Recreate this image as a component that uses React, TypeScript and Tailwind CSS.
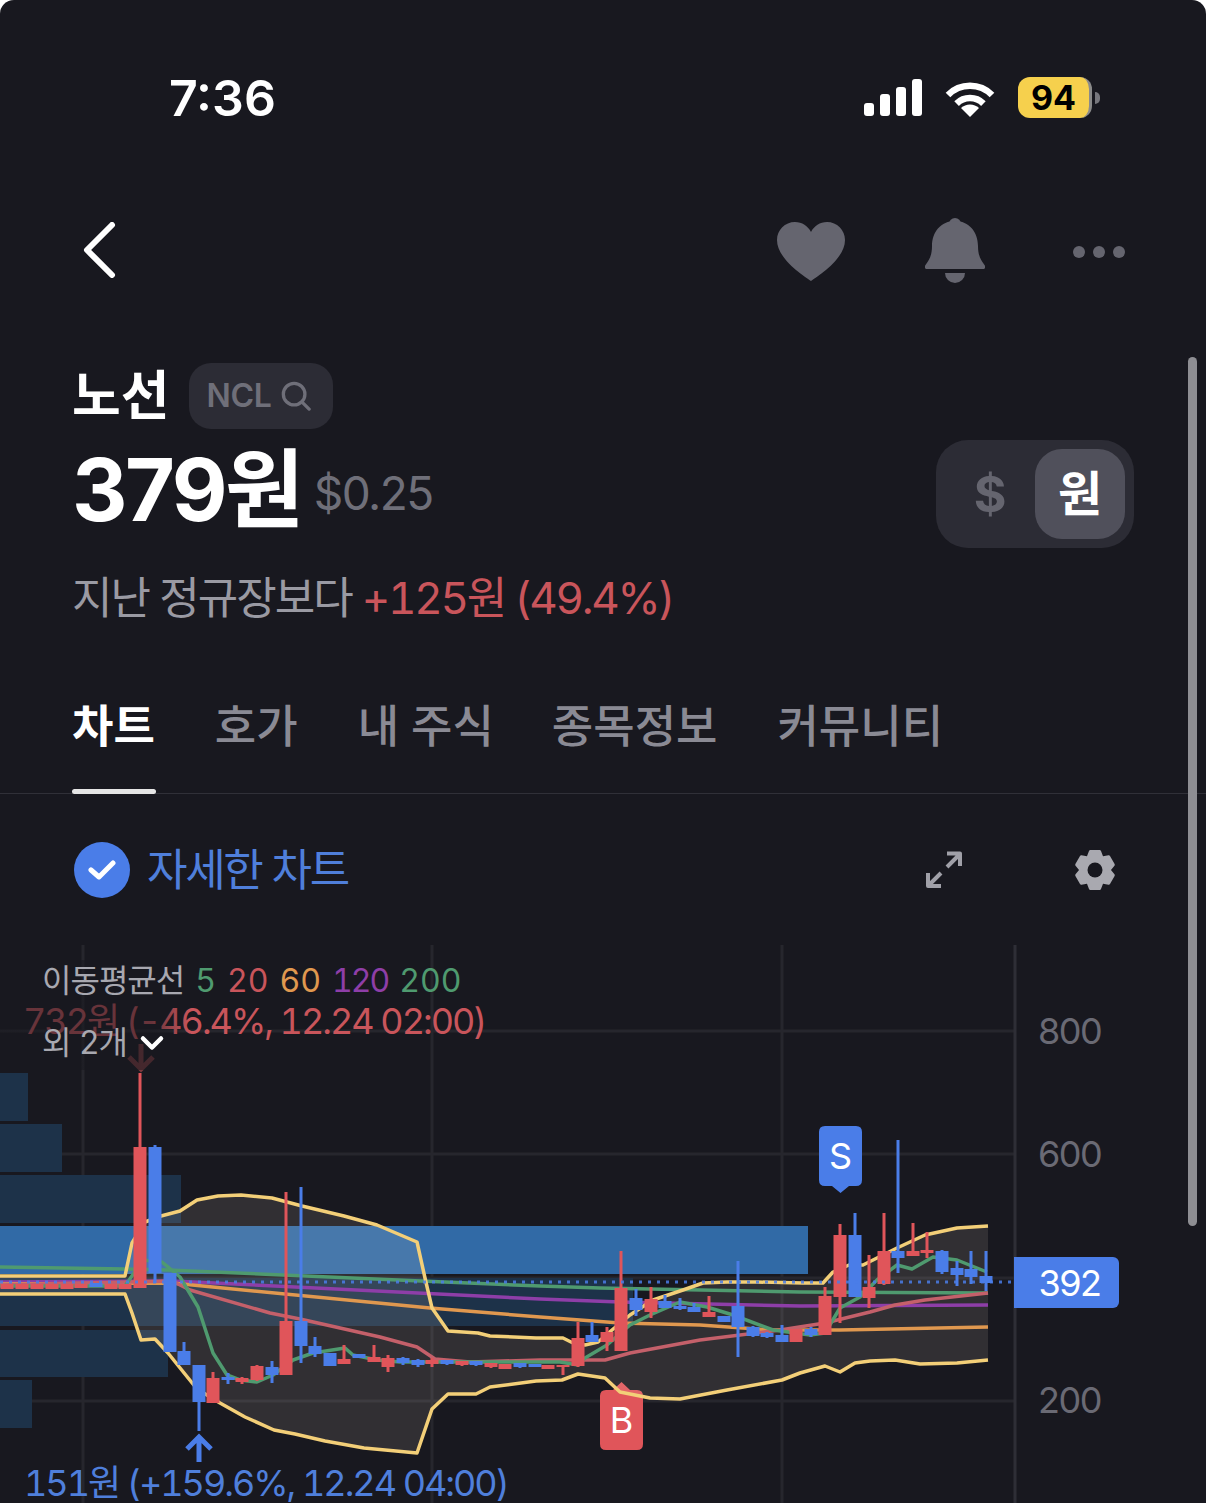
import React from "react";
import { ChevronDown } from "lucide-react";

const RED = "#e0555a";
const BLUE = "#4a7de8";

// x, wick top, wick bottom, body top, body bottom, red?
type Candle = [number, number, number, number, number, boolean];

const candles: Candle[] = [
  [7, 1284, 1289, 1284, 1289, true], [22, 1284, 1289, 1284, 1289, true], [37, 1284, 1289, 1284, 1289, true],
  [52, 1284, 1289, 1284, 1289, true], [67, 1284, 1289, 1284, 1289, true], [81, 1284, 1288, 1284, 1288, true],
  [96, 1283, 1287, 1283, 1287, false], [111, 1284, 1289, 1284, 1289, true], [125, 1284, 1289, 1284, 1289, true],
  [140, 1073, 1288, 1147, 1288, true],
  [155, 1145, 1283, 1147, 1273, false],
  [170, 1273, 1352, 1273, 1352, false],
  [184, 1342, 1365, 1351, 1365, false],
  [199, 1365, 1431, 1365, 1402, false],
  [213, 1372, 1403, 1378, 1403, true],
  [228, 1373, 1384, 1377, 1380, false],
  [242, 1377, 1384, 1378, 1382, true],
  [257, 1365, 1381, 1366, 1380, true],
  [272, 1361, 1383, 1367, 1375, false],
  [286, 1192, 1375, 1321, 1375, true],
  [301, 1187, 1363, 1321, 1346, false],
  [315, 1337, 1357, 1346, 1354, false],
  [330, 1353, 1366, 1353, 1366, false],
  [344, 1345, 1364, 1359, 1364, true],
  [359, 1354, 1358, 1354, 1358, false],
  [374, 1345, 1362, 1357, 1362, true],
  [388, 1355, 1372, 1358, 1367, true],
  [403, 1357, 1365, 1358, 1363, false],
  [418, 1359, 1367, 1360, 1365, false],
  [432, 1358, 1367, 1360, 1364, true],
  [447, 1360, 1365, 1360, 1364, false],
  [462, 1361, 1366, 1361, 1365, true],
  [476, 1361, 1366, 1361, 1365, false],
  [491, 1363, 1368, 1363, 1367, true],
  [505, 1364, 1369, 1364, 1369, true],
  [520, 1363, 1368, 1363, 1367, false],
  [535, 1364, 1367, 1364, 1367, false],
  [548, 1365, 1369, 1365, 1369, true],
  [563, 1365, 1375, 1365, 1367, true],
  [578, 1322, 1367, 1338, 1366, true],
  [592, 1322, 1342, 1335, 1342, false],
  [607, 1327, 1351, 1332, 1342, true],
  [621, 1251, 1351, 1288, 1351, true],
  [636, 1289, 1316, 1298, 1310, false],
  [651, 1287, 1318, 1299, 1312, true],
  [665, 1295, 1308, 1301, 1308, false],
  [680, 1298, 1310, 1306, 1309, false],
  [694, 1303, 1312, 1307, 1312, false],
  [709, 1296, 1317, 1312, 1317, true],
  [724, 1316, 1322, 1316, 1322, false],
  [738, 1261, 1357, 1306, 1327, false],
  [753, 1326, 1337, 1327, 1336, false],
  [767, 1332, 1338, 1333, 1337, false],
  [782, 1325, 1342, 1335, 1342, false],
  [796, 1329, 1342, 1329, 1342, true],
  [811, 1327, 1337, 1329, 1335, false],
  [825, 1287, 1335, 1296, 1335, true],
  [840, 1224, 1323, 1235, 1297, true],
  [855, 1213, 1297, 1235, 1297, false],
  [869, 1255, 1308, 1287, 1298, true],
  [884, 1213, 1285, 1251, 1284, true],
  [898, 1140, 1273, 1251, 1258, false],
  [913, 1223, 1256, 1251, 1256, true],
  [927, 1232, 1258, 1250, 1253, true],
  [942, 1250, 1274, 1251, 1272, false],
  [957, 1261, 1286, 1268, 1275, false],
  [971, 1251, 1284, 1269, 1277, false],
  [986, 1251, 1291, 1276, 1283, false],
];

const upperBand =
  "0,1276 125,1276 132,1243 145,1222 161,1216 180,1211 197,1200 218,1196 241,1195 272,1198 302,1206 344,1216 377,1225 417,1242 425,1278 432,1308 448,1331 478,1333 490,1336 536,1338 563,1338 573,1343 585,1345 598,1342 612,1330 630,1315 653,1300 683,1290 703,1283 727,1282 757,1282 803,1283 823,1283 833,1272 849,1265 863,1265 877,1258 897,1248 925,1235 957,1228 988,1226";
const lowerBand =
  "988,1360 957,1363 920,1364 895,1360 870,1361 855,1363 840,1372 825,1366 800,1373 782,1380 727,1390 680,1399 650,1398 620,1392 605,1378 578,1374 562,1380 536,1381 490,1387 476,1394 448,1394 432,1409 417,1453 364,1448 325,1441 295,1434 274,1430 245,1417 220,1403 197,1389 168,1353 155,1339 141,1340 132,1313 125,1294 0,1294";

const ma200 = "0,1267 125,1269 168,1270 421,1281 540,1286 600,1288 800,1292 988,1293";
const ma120 = "0,1282 172,1281 540,1299 620,1302 800,1306 988,1305";
const ma60 = "0,1284 172,1283 430,1308 540,1317 620,1323 700,1325 770,1330 840,1330 988,1327";
const ma20 =
  "0,1285 172,1281 190,1290 270,1313 300,1319 380,1337 417,1347 435,1359 470,1362 540,1360 605,1360 630,1353 700,1340 780,1330 825,1323 870,1312 895,1305 925,1300 988,1293";
const ma5 =
  "0,1286 125,1286 143,1260 162,1262 180,1277 198,1307 213,1353 227,1375 240,1380 257,1382 273,1375 293,1360 313,1353 345,1348 353,1355 377,1360 400,1362 560,1362 578,1365 585,1358 607,1345 630,1325 650,1315 680,1302 707,1307 733,1315 773,1330 810,1335 825,1333 840,1308 860,1297 877,1280 897,1265 912,1269 933,1257 957,1260 987,1272";

// six teeth, rounded off with a round stroke
const gearPoints = Array.from({ length: 6 }, (_, k) => {
  const c = k * 60 - 90;
  return [
    [c - 14, 19],
    [c + 14, 19],
    [c + 30, 14],
  ]
    .map(([deg, r]) => {
      const a = (deg * Math.PI) / 180;
      return `${(22 + r * Math.cos(a)).toFixed(1)},${(22 + r * Math.sin(a)).toFixed(1)}`;
    })
    .join(" ");
}).join(" ");

function Chart() {
  return (
    <svg viewBox="0 930 1206 573" className="absolute inset-0 w-[1206px] h-[573px]">
      {/* grid */}
      <g stroke="#26262d" strokeWidth="3">
        <line x1="83" y1="945" x2="83" y2="1503" />
        <line x1="432" y1="945" x2="432" y2="1503" />
        <line x1="782" y1="945" x2="782" y2="1503" />
        <line x1="0" y1="1031" x2="1015" y2="1031" />
        <line x1="0" y1="1154" x2="1015" y2="1154" />
        <line x1="0" y1="1278" x2="1015" y2="1278" />
        <line x1="0" y1="1401" x2="1015" y2="1401" />
      </g>
      <line x1="1015" y1="945" x2="1015" y2="1503" stroke="#2e2e36" strokeWidth="3" />

      {/* volume profile */}
      <g fill="#1d3249">
        <rect x="0" y="1073" width="28" height="48" />
        <rect x="0" y="1124" width="62" height="48" />
        <rect x="0" y="1175" width="181" height="48" />
        <rect x="0" y="1278" width="633" height="48" />
        <rect x="0" y="1330" width="168" height="47" />
        <rect x="0" y="1380" width="32" height="48" />
      </g>
      <rect x="0" y="1226" width="808" height="48" fill="#316aa6" />

      {/* B badge goes under the band line */}
      <path
        d="M606 1390 H613 L621.5 1382 L630 1390 H637 Q643 1390 643 1396 V1444 Q643 1450 637 1450 H606 Q600 1450 600 1444 V1396 Q600 1390 606 1390Z"
        fill={RED}
      />

      <polygon points={`${upperBand} ${lowerBand}`} fill="#fff0dc" fillOpacity="0.11" />

      <g fill="none" strokeWidth="3.5" strokeLinejoin="round">
        <polyline points={ma200} stroke="#4f9a6f" />
        <polyline points={ma120} stroke="#8e3ea8" />
        <polyline points={ma60} stroke="#e0984f" />
        <polyline points={ma20} stroke="#c4606a" />
        <polyline points={ma5} stroke="#4f9a6f" />
        <polyline points={upperBand} stroke="#f3cf78" />
        <polyline points={lowerBand} stroke="#f3cf78" />
      </g>

      {candles.map(([x, wt, wb, bt, bb, up]) => (
        <g key={x} fill={up ? RED : BLUE}>
          <rect x={x - 1.5} y={wt} width="3" height={wb - wt} />
          <rect x={x - 6.5} y={bt} width="13" height={bb - bt} />
        </g>
      ))}

      <line x1="0" y1="1282" x2="1014" y2="1282" stroke={BLUE} strokeWidth="3" strokeDasharray="3 6" strokeOpacity="0.85" />

      {/* S badge */}
      <path
        d="M825 1126 H856 Q862 1126 862 1132 V1180 Q862 1186 856 1186 H849 L840.5 1193 L832 1186 H825 Q819 1186 819 1180 V1132 Q819 1126 825 1126Z"
        fill={BLUE}
      />

      {/* high and low arrows */}
      <path d="M141 1044 V1068 M129 1057 L141 1069 L153 1057" fill="none" stroke="#7a3a3e" strokeWidth="5" />
      <path d="M199 1462 V1438 M187 1449 L199 1437 L211 1449" fill="none" stroke={BLUE} strokeWidth="5" />
    </svg>
  );
}

export default function App() {
  return (
    <div className="relative w-[1206px] h-[1503px] overflow-hidden bg-white [font-family:Inter,'Noto_Sans_CJK_KR',sans-serif]">
      <div className="w-full h-full rounded-t-[14px] bg-[#18181f] flex flex-col">
        {/* status bar */}
        <div className="h-[196px] pl-[169px] pr-[106px] pb-[1px] flex items-center justify-between">
          <span className="text-[50px] leading-none font-semibold text-white">7:36</span>
          <div className="flex items-center">
            <svg width="58" height="38" viewBox="0 0 58 38" className="fill-white">
              <rect x="0" y="24" width="10" height="13" rx="3" />
              <rect x="16" y="15" width="10" height="22" rx="3" />
              <rect x="32" y="8" width="10" height="29" rx="3" />
              <rect x="48" y="0" width="10" height="37" rx="3" />
            </svg>
            <svg width="52" height="38" viewBox="0 0 52 38" className="ml-[22px]">
              <path d="M4 16 A31 31 0 0 1 48 16" fill="none" stroke="#fff" strokeWidth="6.5" />
              <path d="M12.6 24.6 A19 19 0 0 1 39.4 24.6" fill="none" stroke="#fff" strokeWidth="6.5" />
              <path d="M26 38 L17 29 A13 13 0 0 1 35 29 Z" fill="#fff" />
            </svg>
            <div className="ml-[22px] flex items-center">
              <div className="w-[74px] h-[41px] rounded-[12px] bg-[#f6d04d] border-r-[3px] border-r-[#8a8a8a] flex items-center justify-center text-[34px] font-bold text-black">
                94
              </div>
              <div className="ml-[3px] w-[5px] h-[12px] rounded-r-full bg-[#77777d]" />
            </div>
          </div>
        </div>

        {/* top nav */}
        <div className="h-[110px] pl-[82px] pr-[81px] pb-[2px] flex items-center justify-between">
          <svg width="34" height="56" viewBox="0 0 34 56">
            <path d="M30 3 L5 28 L30 53" fill="none" stroke="#fff" strokeWidth="6" strokeLinecap="round" strokeLinejoin="round" />
          </svg>
          <div className="flex items-center">
            <svg width="68" height="60" viewBox="0 0 68 60" className="fill-[#65656f] mt-[4px]">
              <path d="M34 59 C30 56 0 38 0 18 C0 8 8 0 18 0 C25 0 31 4 34 10 C37 4 43 0 50 0 C60 0 68 8 68 18 C68 38 38 56 34 59Z" />
            </svg>
            <svg width="60" height="66" viewBox="0 0 60 66" className="fill-[#65656f] ml-[80px] mt-[2px]">
              <circle cx="30" cy="6" r="6" />
              <path d="M30 3 C44 3 53 14 53 28 C53 38 56 42 59.500 47 C61 49 60 51 58 51 L2 51 C0 51 -1 49 0.500 47 C4 42 7 38 7 28 C7 14 16 3 30 3Z" />
              <path d="M20 55 H40 A10 10 0 0 1 20 55Z" />
            </svg>
            <div className="ml-[88px] flex gap-[8px] mt-[4px]">
              <div className="w-[12px] h-[12px] rounded-full bg-[#65656f]" />
              <div className="w-[12px] h-[12px] rounded-full bg-[#65656f]" />
              <div className="w-[12px] h-[12px] rounded-full bg-[#65656f]" />
            </div>
          </div>
        </div>

        {/* stock summary */}
        <div className="pt-[57px] pl-[72px] pr-[72px] flex items-start justify-between">
          <div>
            <div className="flex items-center">
              <span className="text-[53px] leading-[66px] font-bold text-white">노선</span>
              <div className="ml-[19px] h-[66px] w-[144px] rounded-[22px] bg-[#2c2c35] flex items-center pl-[18px] gap-[9px]">
                <span className="text-[32px] font-semibold text-[#6f6f79] tracking-[-0.3px]">NCL</span>
                <svg width="30" height="30" viewBox="0 0 32 32" fill="none" stroke="#6f6f79" strokeWidth="3.500" strokeLinecap="round">
                  <circle cx="14" cy="14" r="11.500" />
                  <path d="M23 23 L30 30" />
                </svg>
              </div>
            </div>
            <div className="mt-[15px] flex items-center">
              <span className="text-[86px] leading-[92px] font-bold text-white tracking-[-2.5px]">379원</span>
              <span className="ml-[12px] mt-[6px] text-[46px] leading-[60px] text-[#6f6f79] tracking-[-1.5px]">$0.25</span>
            </div>
            <div className="mt-[30px] text-[44px] leading-[64px] whitespace-nowrap">
              <span className="text-[#9a9aa3] tracking-[-2px]">지난 정규장보다</span>
              <span className="ml-[10px] text-[#c9555b] tracking-[-2.3px] tabular-nums">+125원 (49.4%)</span>
            </div>
          </div>
          <div className="mt-[77px] w-[198px] h-[108px] rounded-[32px] bg-[#2c2c35] flex items-center justify-end pr-[9px]">
            <span className="w-[90px] text-center text-[50px] font-bold text-[#65656f]">$</span>
            <div className="w-[90px] h-[90px] rounded-[27px] bg-[#50505b] flex items-center justify-center text-[48px] font-bold text-white">
              원
            </div>
          </div>
        </div>

        {/* tabs */}
        <div className="mt-[40px] h-[124px] pl-[72px] border-b border-[#303038] flex gap-[60px] text-[45px] text-[#8a8a94] font-medium whitespace-nowrap">
          <div className="relative pt-[25px] leading-[64px] font-bold text-white">
            차트
            <div className="absolute -bottom-[1px] left-0 w-[84px] h-[5px] rounded-full bg-[#e5e5e5]" />
          </div>
          <div className="pt-[25px] leading-[64px]">호가</div>
          <div className="pt-[25px] leading-[64px]">내 주식</div>
          <div className="-ml-[2px] pt-[25px] leading-[64px]">종목정보</div>
          <div className="pt-[25px] leading-[64px]">커뮤니티</div>
        </div>

        {/* chart toolbar */}
        <div className="pl-[74px] pr-[89px] pt-[48px] pb-[32px] flex items-center justify-between shrink-0">
          <div className="flex items-center gap-[17px]">
            <div className="w-[56px] h-[56px] rounded-full bg-[#4a7de8] flex items-center justify-center">
              <svg width="28" height="20" viewBox="0 0 28 20">
                <path d="M3 10 L11 17 L25 3" fill="none" stroke="#fff" strokeWidth="5" strokeLinecap="round" strokeLinejoin="round" />
              </svg>
            </div>
            <span className="text-[44px] leading-[56px] text-[#4f7fdb] tracking-[-2.3px]">자세한 차트</span>
          </div>
          <div className="flex items-center gap-[110px]">
            <svg width="38" height="38" viewBox="0 0 38 38" fill="none" stroke="#a0a0a8" strokeWidth="4" strokeLinejoin="round">
              <path d="M22 2.500 H35 V15 M34 4 L22 16" />
              <path d="M3 22 V35 H16 M4 34 L16 22" />
            </svg>
            <svg width="44" height="44" viewBox="0 0 44 44" className="fill-[#a9a9b0]">
              <polygon points={gearPoints} stroke="#a9a9b0" strokeWidth="3" strokeLinejoin="round" />
              <circle cx="22" cy="22" r="7.500" fill="#18181f" />
            </svg>
          </div>
        </div>

        {/* chart */}
        <div className="relative flex-1 overflow-hidden">
          <Chart />

          <div className="absolute left-[23px] top-[69px] text-[36px] leading-[44px] whitespace-nowrap text-[#c9555b] tracking-[-2px] tabular-nums">
            732원 (-46.4%, 12.24 02:00)
          </div>
          {/* legend scrim dims whatever sits under it */}
          <div className="absolute left-0 top-[30px] w-[190px] h-[110px] bg-[linear-gradient(to_right,rgba(24,24,31,0.55)_80%,rgba(24,24,31,0))]" />
          <div className="absolute left-[42px] top-[30px] flex items-center gap-[11px] text-[32px] leading-[42px] whitespace-nowrap tabular-nums">
            <span className="text-[#a8a8b0] tracking-[-1px]">이동평균선</span>
            <span className="text-[#4f9a6f]">5</span>
            <span className="text-[#c9555b]">20</span>
            <span className="text-[#e0984f]">60</span>
            <span className="text-[#8e3ea8] tracking-[-2px]">120</span>
            <span className="text-[#4f9a6f]">200</span>
          </div>
          <div className="absolute left-[42px] top-[92px] flex items-center gap-[7px] text-[32px] leading-[42px] whitespace-nowrap text-[#a8a8b0] tracking-[-0.5px]">
            외 2개
            <ChevronDown className="text-white" size={36} strokeWidth={3} />
          </div>

          <div className="absolute left-[24px] top-[533px] text-[36px] leading-[40px] whitespace-nowrap text-[#4f7fdb] tracking-[-2px] tabular-nums">
            151원 (+159.6%, 12.24 04:00)
          </div>

          <div className="absolute left-[819px] top-[196px] w-[43px] h-[60px] flex items-center justify-center text-[36px] text-white">S</div>
          <div className="absolute left-[600px] top-[460px] w-[43px] h-[60px] flex items-center justify-center text-[36px] text-white">B</div>

          <div className="absolute left-[1038px] top-[79px] text-[36px] leading-[44px] text-[#6a6a74] tracking-[-1.5px]">800</div>
          <div className="absolute left-[1038px] top-[202px] text-[36px] leading-[44px] text-[#6a6a74] tracking-[-1.5px]">600</div>
          <div className="absolute left-[1038px] top-[448px] text-[36px] leading-[44px] text-[#6a6a74] tracking-[-1.5px]">200</div>
          <div className="absolute left-[1014px] top-[327px] w-[105px] h-[51px] rounded-r-[6px] bg-[#4a7de8] flex items-center justify-center pl-[6px] text-[36px] text-white tracking-[-1.5px]">
            392
          </div>
        </div>
      </div>

      {/* scrollbar floats over the page */}
      <div className="absolute left-[1188px] top-[357px] w-[9px] h-[869px] rounded-full bg-[#8e8e93]" />
    </div>
  );
}
